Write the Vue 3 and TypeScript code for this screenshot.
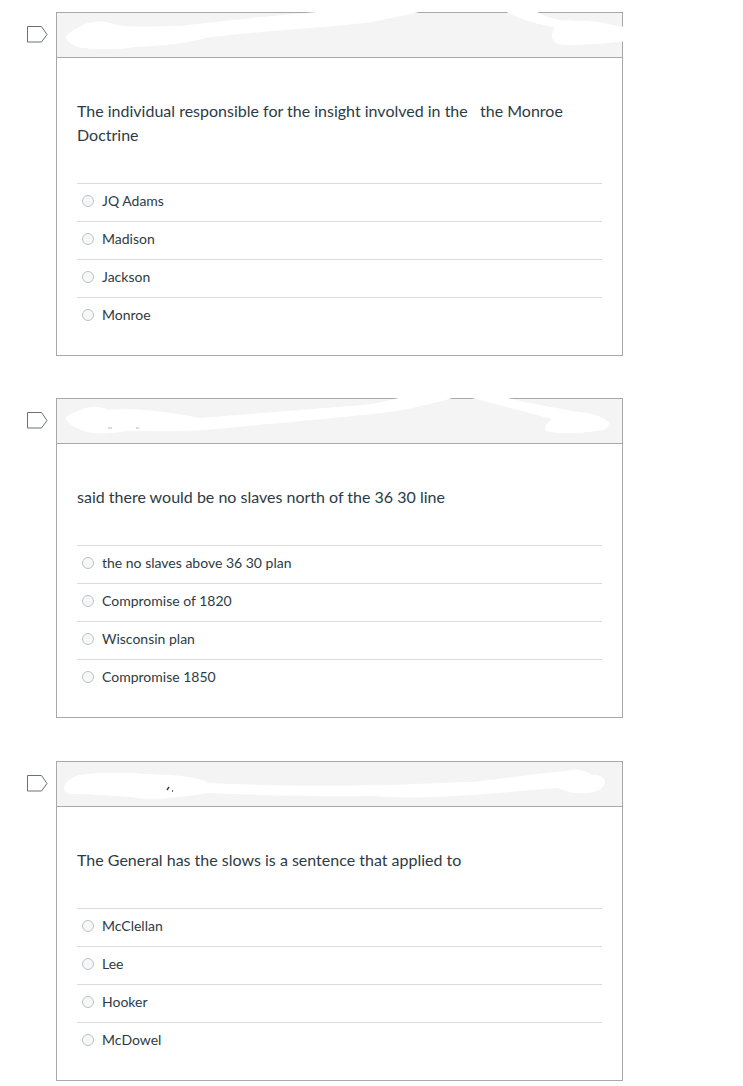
<script setup lang="ts">
interface Question {
  text: string
  options: string[]
  scribbles: string[]
  marks: string[]
  markClass: string
  extraClass: string
}

const questions: Question[] = [
  {
    text: 'The individual responsible for the insight involved in the \u00a0 the Monroe Doctrine',
    options: ['JQ Adams', 'Madison', 'Jackson', 'Monroe'],
    scribbles: [
      'M10 25 C12 20 20 17 29 12 C40 8 52 9 60 13 C80 16 105 14 124 14 C170 8 230 3 280 -2 L372 -2 C355 2 335 6 316 10 C270 16 200 19 149 26 C130 32 100 34 80 35 C60 38 35 38 22 35 C16 33 11 30 10 25 Z',
      'M447 -2 L477 -2 C485 2 490 5 503 8 C525 9 545 9 552 12 C560 14 566 15 570 15 L570 29 C555 31 530 33 510 33 C500 33 496 29 496 24 C496 20 497 17 499 15 C480 12 465 8 447 -2 Z',
    ],
    marks: [],
    markClass: '',
    extraClass: '',
  },
  {
    text: 'said there would be no slaves north of the 36 30 line',
    options: ['the no slaves above 36 30 plan', 'Compromise of 1820', 'Wisconsin plan', 'Compromise 1850'],
    scribbles: [
      'M10 20 C12 16 20 14 27 11 C35 8 45 8 52 12 C70 10 100 11 144 20 C190 16 250 12 316 6 L352 -2 L396 0 C370 8 340 14 316 16 C260 22 200 27 148 32 C125 34 100 33 70 33 C55 36 40 36 30 34 C20 30 11 26 10 20 Z',
      'M408 -2 L444 -2 C470 5 500 10 516 13 C535 15 548 18 553 25 C553 30 548 33 540 33 C520 36 500 36 490 33 C488 30 488 28 496 21 C470 14 440 6 408 -2 Z',
    ],
    marks: ['M52 30 L56 30', 'M80 30 L83 30'],
    markClass: 'mark-faint',
    extraClass: '',
  },
  {
    text: 'The General has the slows is a sentence that applied to',
    options: ['McClellan', 'Lee', 'Hooker', 'McDowel'],
    scribbles: [
      'M8 26 C10 18 20 14 30 13 C60 10 90 13 114 14 C130 15 148 18 152 22 C200 24 260 26 316 24 C360 24 390 21 416 21 C450 17 480 13 516 9 C525 8 532 11 536 14 C542 13 549 16 549 21 C548 28 540 32 530 32 C518 33 508 30 502 27 C480 28 450 32 416 34 C370 37 340 37 316 35 C270 36 200 34 152 32 C140 34 125 36 114 37 C100 39 85 38 75 36 C50 34 25 33 15 33 C10 32 8 30 8 26 Z',
    ],
    marks: ['M111 29 L113 26', 'M116 30 L117 30'],
    markClass: 'mark-dark',
    extraClass: 'card-row-late',
  },
]
</script>

<template>
  <main class="page">
    <section
      v-for="q in questions"
      :key="q.text"
      class="card-row"
      :class="q.extraClass"
    >
      <div class="gutter">
        <svg class="flag" width="21" height="17" viewBox="0 0 21 17" aria-hidden="true">
          <path d="M.5.5H14.5L20 8.5 14.5 16H.5Z" />
        </svg>
      </div>
      <article class="card">
        <header class="card-head"></header>
        <div class="card-body">
          <p class="question">{{ q.text }}</p>
          <ul class="options">
            <li v-for="opt in q.options" :key="opt" class="option">
              <span class="radio"></span>
              <span>{{ opt }}</span>
            </li>
          </ul>
        </div>
        <svg class="scribble" width="575" height="60" viewBox="0 -6 575 60" aria-hidden="true">
          <path v-for="d in q.scribbles" :key="d" :d="d" class="scribble-fill" />
          <path v-for="d in q.marks" :key="d" :d="d" :class="q.markClass" />
        </svg>
      </article>
    </section>
  </main>
</template>

<style>
html, body { background: #fff; }
</style>

<style scoped>
.page {
  width: 743px;
  padding-top: 12px;
  display: flex;
  flex-direction: column;
  gap: 42px;
  font-family: Lato, "Liberation Sans", sans-serif;
  color: #2d3b45;
  box-sizing: border-box;
}
.card-row {
  display: flex;
  align-items: flex-start;
  padding-left: 27px;
}
.card-row-late {
  margin-top: 1px;
}
.gutter {
  width: 29px;
  padding-top: 14px;
  flex: none;
}
.flag {
  display: block;
}
.flag path {
  fill: #fff;
  stroke: #66727b;
  stroke-width: 1;
}
.card {
  position: relative;
  width: 567px;
  border: 1px solid #a8a8a8;
  box-sizing: border-box;
}
.card-head {
  height: 44px;
  background: #f4f4f4;
  border-bottom: 1px solid #a8a8a8;
}
.card-body {
  padding: 41px 20px 20px;
}
.question {
  margin: 0 0 36px;
  font-size: 16px;
  line-height: 24px;
}
.options {
  list-style: none;
  margin: 0;
  padding: 0;
}
.option {
  display: flex;
  align-items: center;
  gap: 8px;
  height: 38px;
  box-sizing: border-box;
  padding: 0 0 4px 5px;
  border-top: 1px solid #d9dcde;
  font-size: 14px;
}
.radio {
  width: 12px;
  height: 12px;
  box-sizing: border-box;
  border: 1px solid #bcc2c6;
  border-radius: 50%;
  background: #f7f7f7;
  flex: none;
}
.scribble {
  position: absolute;
  left: -1px;
  top: -7px;
  overflow: visible;
  pointer-events: none;
}
.scribble-fill {
  fill: #fff;
}
.mark-faint {
  fill: none;
  stroke: #b4b8ba;
  stroke-width: 1;
}
.mark-dark {
  fill: none;
  stroke: #3a3a3a;
  stroke-width: 1.4;
}
</style>
